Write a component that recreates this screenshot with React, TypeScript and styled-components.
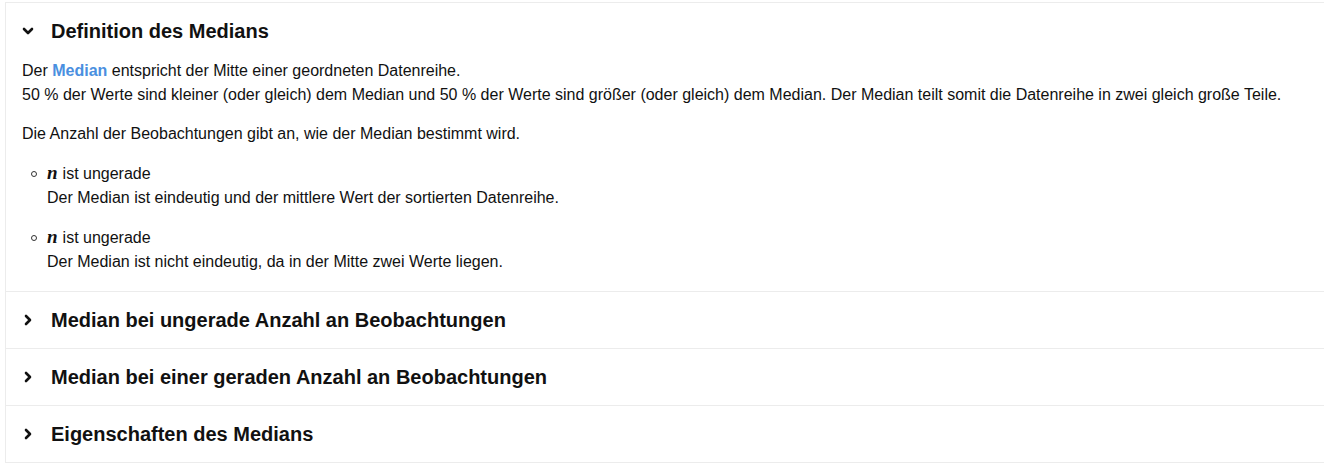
import React, { useState } from 'react';
import styled, { createGlobalStyle } from 'styled-components';

const GlobalStyle = createGlobalStyle`
  body {
    margin: 0;
    background: #ffffff;
    font-family: "Liberation Sans", Arial, sans-serif;
    color: #111111;
    overflow: hidden;
  }
`;

const Page = styled.div`
  padding: 2px 0 0 5px;
`;

const Accordion = styled.div`
  width: 1330px;
  border-top: 1px solid #ececec;
  border-left: 1px solid #ececec;
`;

const Item = styled.section`
  border-bottom: 1px solid #ececec;
`;

const Header = styled.button`
  display: flex;
  align-items: center;
  gap: 17px;
  width: 100%;
  height: 56px;
  padding: 0 0 0 16px;
  border: none;
  background: transparent;
  cursor: pointer;
  text-align: left;
  font-family: inherit;
  color: #111111;
`;

const Chevron = styled.svg<{ $open: boolean }>`
  width: 12px;
  height: 12px;
  flex: none;
  transform: rotate(${(p) => (p.$open ? '90deg' : '0deg')});
`;

const Title = styled.h3`
  margin: 0;
  font-size: 20px;
  font-weight: 700;
`;

const Body = styled.div`
  padding: 0 16px 17px 16px;
  font-size: 16px;
  line-height: 24px;
`;

const Para = styled.p<{ $last?: boolean }>`
  margin: 0 0 ${(p) => (p.$last ? '0' : '15px')};
`;

const Highlight = styled.strong`
  color: #4a8fe0;
`;

const List = styled.ul`
  margin: 0;
  padding: 0 0 0 25px;
  list-style: none;
`;

const ListItem = styled.li`
  position: relative;
  margin-top: 16px;
  &::before {
    content: '';
    position: absolute;
    left: -16px;
    top: 9px;
    width: 4px;
    height: 4px;
    border: 1px solid #333;
    border-radius: 50%;
  }
`;

const MathVar = styled.i`
  font-family: "Liberation Serif", "Times New Roman", serif;
  font-style: italic;
  font-weight: 700;
  font-size: 19px;
  line-height: 0;
  margin-right: 5px;
`;

const sections = [
  'Definition des Medians',
  'Median bei ungerade Anzahl an Beobachtungen',
  'Median bei einer geraden Anzahl an Beobachtungen',
  'Eigenschaften des Medians',
];

const Content = () => (
  <Body>
    <Para>
      Der <Highlight>Median</Highlight> entspricht der Mitte einer geordneten Datenreihe.
      <br />
      50 % der Werte sind kleiner (oder gleich) dem Median und 50 % der Werte sind größer (oder gleich) dem Median. Der Median teilt somit die Datenreihe in zwei gleich große Teile.
    </Para>
    <Para $last>Die Anzahl der Beobachtungen gibt an, wie der Median bestimmt wird.</Para>
    <List>
      <ListItem>
        <MathVar>n</MathVar>ist ungerade
        <br />
        Der Median ist eindeutig und der mittlere Wert der sortierten Datenreihe.
      </ListItem>
      <ListItem>
        <MathVar>n</MathVar>ist ungerade
        <br />
        Der Median ist nicht eindeutig, da in der Mitte zwei Werte liegen.
      </ListItem>
    </List>
  </Body>
);

export default function App() {
  const [open, setOpen] = useState(0);
  return (
    <Page>
      <GlobalStyle />
      <Accordion>
        {sections.map((s, i) => (
          <Item key={s}>
            <Header onClick={() => setOpen(open === i ? -1 : i)}>
              <Chevron $open={open === i} viewBox="0 0 12 12">
                <path d="M4 2 L8 6 L4 10" fill="none" stroke="#111" strokeWidth="2.6" strokeLinecap="round" strokeLinejoin="round" />
              </Chevron>
              <Title>{s}</Title>
            </Header>
            {open === i && <Content />}
          </Item>
        ))}
      </Accordion>
    </Page>
  );
}
